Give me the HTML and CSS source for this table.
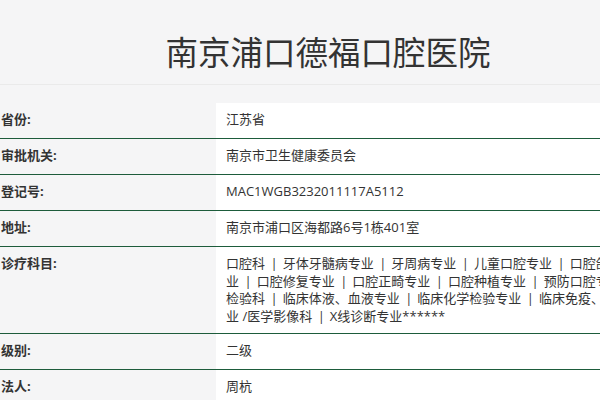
FILE: index.html
```html
<!DOCTYPE html>
<html lang="zh-CN">
<head>
<meta charset="utf-8">
<title>南京浦口德福口腔医院</title>
<link rel="stylesheet" href="styles.css">
</head>
<body>
<div class="page">
  <header class="header">
    <h1 class="title">南京浦口德福口腔医院</h1>
  </header>
  <div class="info">
    <div class="row">
      <div class="label">省份:</div>
      <div class="value">江苏省</div>
    </div>
    <div class="row">
      <div class="label">审批机关:</div>
      <div class="value">南京市卫生健康委员会</div>
    </div>
    <div class="row">
      <div class="label">登记号:</div>
      <div class="value">MAC1WGB3232011117A5112</div>
    </div>
    <div class="row">
      <div class="label">地址:</div>
      <div class="value">南京市浦口区海都路6号1栋401室</div>
    </div>
    <div class="row">
      <div class="label">诊疗科目:</div>
      <div class="value multi">口腔科<span class="sep">|</span>牙体牙髓病专业<span class="sep">|</span>牙周病专业<span class="sep">|</span>儿童口腔专业<span class="sep">|</span>口腔颌面外科专<br>业<span class="sep">|</span>口腔修复专业<span class="sep">|</span>口腔正畸专业<span class="sep">|</span>口腔种植专业<span class="sep">|</span>预防口腔专业<span class="sep">|</span>医学<br>检验科<span class="sep">|</span>临床体液、血液专业<span class="sep">|</span>临床化学检验专业<span class="sep">|</span>临床免疫、血清学专<br>业 /医学影像科<span class="sep">|</span>X线诊断专业******</div>
    </div>
    <div class="row">
      <div class="label">级别:</div>
      <div class="value">二级</div>
    </div>
    <div class="row">
      <div class="label">法人:</div>
      <div class="value">周杭</div>
    </div>
  </div>
</div>
</body>
</html>
```

FILE: styles.css
```css
html, body {
  margin: 0;
  padding: 0;
  background: #f5f5f6;
  overflow: hidden;
}
body {
  font-family: "Open Sans", "Noto Sans CJK SC", sans-serif;
  color: #333;
}
.page {
  width: 656px;
}
.header {
  height: 85px;
  box-sizing: border-box;
  padding-top: 34px;
  border-bottom: 1px solid #eaeaea;
  text-align: center;
}
.title {
  margin: 0;
  font-size: 32.5px;
  line-height: 38px;
  font-weight: normal;
  color: #333;
}
.info {
  margin-top: 18px;
}
.row {
  display: grid;
  grid-template-columns: 216px 1fr;
  border-bottom: 1px solid #1d5c3b;
}
.label {
  padding: 8px 0 7px 1px;
  font-size: 13px;
  line-height: 17.7px;
  font-weight: bold;
  color: #333;
}
.value {
  background: #fff;
  min-height: 35px;
  box-sizing: border-box;
  padding: 8px 10px 7px;
  font-size: 13px;
  line-height: 17.7px;
  white-space: nowrap;
  color: #333;
}
.sep {
  margin: 0 5px 0 5.5px;
}
```
